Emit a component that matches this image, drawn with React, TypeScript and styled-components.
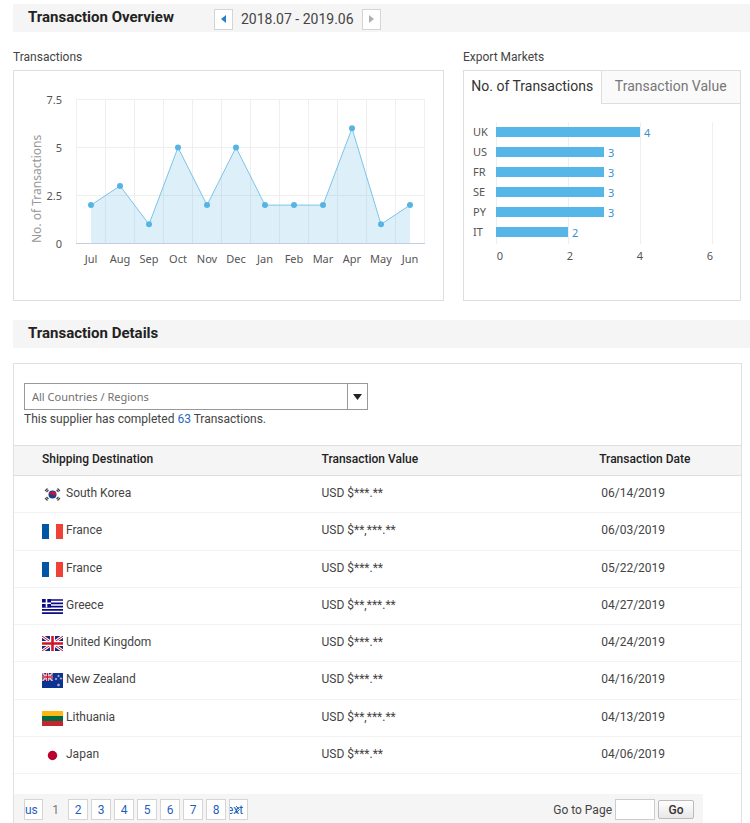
import React from "react";
import styled, { createGlobalStyle } from "styled-components";

const GlobalStyle = createGlobalStyle`
  * { box-sizing: border-box; }
  body {
    margin: 0;
    background: #fff;
    color: #444;
    font: 12px/16px Roboto, "Liberation Sans", sans-serif;
  }
`;

const Page = styled.main`
  padding: 4px 0 0 13px;
`;

const SectionBar = styled.header`
  display: flex;
  align-items: center;
  height: 28px;
  padding-left: 15px;
  background: #f5f5f5;
`;

const SectionTitle = styled.h2`
  margin: 0;
  padding-bottom: 3px;
  color: #222;
  font-size: 15px;
  line-height: 20px;
  font-weight: 700;
`;

const Period = styled.div`
  display: flex;
  align-items: center;
  gap: 8px;
  margin-left: 40px;
  padding-top: 2px;
  font-size: 14px;
`;

const StepButton = styled.button`
  display: flex;
  align-items: center;
  justify-content: center;
  width: 19px;
  height: 21px;
  padding: 0;
  border: 1px solid #d5d5d5;
  background: #fff;
  color: #2a7fd0;
  &:disabled { color: #b0b0b0; }
`;

const Charts = styled.div`
  display: grid;
  grid-template-columns: 431fr 278fr;
  gap: 19px;
  padding: 17px 9px 19px 0;
`;

const ChartBlock = styled.section`
  display: flex;
  flex-direction: column;
  gap: 5px;
  min-width: 0;
`;

const ChartTitle = styled.h3`
  margin: 0;
  font-size: 12px;
  line-height: 16px;
  font-weight: 400;
`;

const Card = styled.div`
  flex: 1;
  border: 1px solid #dedede;
`;

const Drawing = styled.svg`
  display: block;
  width: 100%;
  font: 11px "Noto Sans", "Open Sans", sans-serif;
  fill: #555;
`;

const AxisTitle = styled.text`
  font-size: 12px;
  fill: #999;
`;

const Tabs = styled.div`
  display: flex;
`;

const Tab = styled.button<{ $active?: boolean }>`
  flex: ${(p) => (p.$active ? "137 1 0" : "139 1 0")};
  height: 33px;
  padding: 0 0 3px;
  border: 0 solid #dedede;
  border-width: ${(p) => (p.$active ? "0" : "0 0 1px 1px")};
  background: ${(p) => (p.$active ? "#fff" : "#fafafa")};
  color: ${(p) => (p.$active ? "#333" : "#777")};
  font: 14px/16px Roboto, "Liberation Sans", sans-serif;
  white-space: nowrap;
`;

const Panel = styled.section`
  margin: 15px 8px 0 0;
  border: 1px solid #e0e0e0;
  border-bottom: 0;
`;

const Filter = styled.div`
  padding: 19px 10px 18px;
`;

const SelectBox = styled.div`
  position: relative;
  max-width: 344px;
`;

const Select = styled.select`
  appearance: none;
  display: block;
  width: 100%;
  height: 27px;
  padding: 0 28px 0 7px;
  border: 1px solid #999;
  border-radius: 0;
  background: #fff;
  color: #707070;
  font: 11px/16px "Noto Sans", "Open Sans", sans-serif;
`;

const SelectArrow = styled.span`
  position: absolute;
  top: 1px;
  right: 1px;
  bottom: 1px;
  display: flex;
  align-items: center;
  justify-content: center;
  width: 20px;
  border-left: 1px solid #999;
  pointer-events: none;
`;

const Summary = styled.p`
  margin: 1px 0 0;
  a { color: #1f69c0; text-decoration: none; }
`;

const Table = styled.table`
  width: 100%;
  height: 329px;
  border-collapse: collapse;
  table-layout: fixed;
`;

const HeadRow = styled.tr`
  height: 30px;
  border-top: 1px solid #dedede;
  border-bottom: 1px solid #dedede;
  background: #f5f5f5;
`;

const HeadCell = styled.th<{ $width?: string }>`
  width: ${(p) => p.$width ?? "auto"};
  padding: 0 0 3px;
  color: #222;
  font-weight: 500;
  text-align: left;
  &:first-child { padding-left: 28px; }
`;

const Row = styled.tr`
  border-bottom: 1px solid #f3f3f3;
`;

const Cell = styled.td`
  padding: 0 0 2px;
  &:first-child { padding-left: 28px; }
  &:last-child { padding-left: 2px; }
`;

const Destination = styled.span`
  display: flex;
  align-items: center;
  gap: 3px;
`;

const FlagSvg = styled.svg`
  width: 21px;
  height: 18px;
  padding-top: 3px;
`;

const PagerBar = styled.nav`
  display: flex;
  align-items: flex-start;
  justify-content: space-between;
  margin: 20px 38px 0 0;
  padding: 5px 9px 3px 10px;
  background: #f5f5f5;
`;

const Pages = styled.div`
  display: flex;
  gap: 3px;
`;

const PageLink = styled.a<{ $current?: boolean }>`
  display: flex;
  align-items: center;
  justify-content: center;
  position: relative;
  width: ${(p) => (p.$current ? "19px" : "20px")};
  height: 21px;
  overflow: hidden;
  border: 1px solid ${(p) => (p.$current ? "transparent" : "#d5d5d5")};
  background: ${(p) => (p.$current ? "transparent" : "#fff")};
  color: ${(p) => (p.$current ? "#777" : "#1f5fc0")};
  text-decoration: none;
`;

const EdgeLink = styled(PageLink)<{ $clipped?: boolean }>`
  width: 19px;
  justify-content: flex-start;
  text-indent: ${(p) => (p.$clipped ? "-3px" : "0")};
`;

const EdgeArrow = styled.svg`
  position: absolute;
  top: 5px;
  left: 5px;
`;

const GoForm = styled.form`
  display: flex;
  align-items: center;
  gap: 3px;
`;

const PageInput = styled.input`
  width: 40px;
  height: 21px;
  border: 1px solid #ccc;
  background: #fff;
`;

const GoButton = styled.button`
  width: 36px;
  height: 19px;
  padding: 0;
  border: 1px solid #bbb;
  border-radius: 2px;
  background: linear-gradient(#fff, #e8e8e8);
  color: #333;
  font: 500 12px/16px Roboto, "Liberation Sans", sans-serif;
`;

const monthly: [string, number][] = [
  ["Jul", 2], ["Aug", 3], ["Sep", 1], ["Oct", 5], ["Nov", 2], ["Dec", 5],
  ["Jan", 2], ["Feb", 2], ["Mar", 2], ["Apr", 6], ["May", 1], ["Jun", 2],
];

function LineChart() {
  const left = 62;
  const base = 172;
  const unit = 19.2;
  const step = 29;
  const px = (i: number) => left + 15 + i * step;
  const py = (v: number) => base + 0.5 - v * unit;
  const points = monthly.map(([, v], i) => `${px(i)},${py(v)}`).join(" ");
  return (
    <Drawing viewBox="0 0 429 229" role="img" aria-label="Transactions per month">
      <g fill="#efefef" shapeRendering="crispEdges">
        {Array.from({ length: 13 }, (_, i) => (
          <rect key={i} x={left + i * step} y={28} width={1} height={144} />
        ))}
        {[28, 76, 124].map((y) => <rect key={y} x={left} y={y} width={349} height={1} />)}
      </g>
      <polygon points={`${px(0)},${base} ${points} ${px(11)},${base}`} fill="#56b6e7" fillOpacity={0.2} />
      <rect x={left} y={base} width={349} height={1} fill="#c0d0e0" shapeRendering="crispEdges" />
      <polyline points={points} fill="none" stroke="#7cc4e8" />
      {monthly.map(([m, v], i) => (
        <g key={m}>
          <circle cx={px(i)} cy={py(v)} r={3} fill="#56b4e4" />
          <text x={px(i)} y={192} textAnchor="middle">{m}</text>
        </g>
      ))}
      {[7.5, 5, 2.5, 0].map((v) => (
        <text key={v} x={48} y={base + 5 - v * unit} textAnchor="end">{v}</text>
      ))}
      <AxisTitle transform="translate(27 172) rotate(-90)">No. of Transactions</AxisTitle>
    </Drawing>
  );
}

const markets: [string, number][] = [["UK", 4], ["US", 3], ["FR", 3], ["SE", 3], ["PY", 3], ["IT", 2]];

function BarChart() {
  return (
    <Drawing viewBox="0 0 276 196" role="img" aria-label="Transactions per export market">
      <g fill="#efefef" shapeRendering="crispEdges">
        {[0, 2, 4, 6].map((v) => <rect key={v} x={32 + v * 36} y={18} width={1} height={122} />)}
      </g>
      {markets.map(([name, v], i) => (
        <g key={name}>
          <text x={9} y={32 + i * 20}>{name}</text>
          <rect x={32} y={23 + i * 20} width={v * 36} height={10} fill="#56b6e7" />
          <text x={36 + v * 36} y={33 + i * 20} fill="#3d8fd0">{v}</text>
        </g>
      ))}
      {[0, 2, 4, 6].map((v) => (
        <text key={v} x={36 + v * 35} y={156} textAnchor="middle">{v}</text>
      ))}
    </Drawing>
  );
}

function UnionJack() {
  return (
    <>
      <rect width="21" height="15" fill="#162a7c" />
      <path d="M0 0 21 15M21 0 0 15" stroke="#fff" strokeWidth="3" />
      <path d="M0 0 21 15M21 0 0 15" stroke="#d0142c" strokeWidth="1" />
      <path d="M10.5 0V15M0 7.5H21" stroke="#fff" strokeWidth="5" />
      <path d="M10.5 0V15M0 7.5H21" stroke="#d0142c" strokeWidth="2.6" />
    </>
  );
}

const flags: Record<string, React.ReactNode> = {
  "South Korea": (
    <>
      <circle cx="10.5" cy="7.5" r="4" fill="#1b3f8f" />
      <path d="M7 9.2A4 4 0 0 1 14.2 6.2A2 2 0 0 1 10.5 7.5A2 2 0 0 0 7 9.2Z" fill="#cf1535" />
      <path d="M3 4 5.5 1.5M4.5 5 6.5 3M15.5 1.5 18 4M14.5 3 16.5 5M3 11 5.5 13.5M4.5 10 6.5 12M15.5 13.5 18 11M14.5 12 16.5 10" stroke="#444" strokeWidth="1.2" />
    </>
  ),
  France: (
    <>
      <rect width="7" height="15" fill="#0055a4" />
      <rect x="14" width="7" height="15" fill="#ef4135" />
    </>
  ),
  Greece: (
    <>
      <rect width="21" height="15" fill="#fff" />
      <path d="M0 1H21M0 4.3H21M0 7.6H21M0 10.9H21M0 14.2H21" stroke="#0b0b85" strokeWidth="1.7" />
      <rect width="9" height="8.4" fill="#0b0b85" />
      <path d="M4.5 0V8.4M0 4.2H9" stroke="#fff" strokeWidth="1.6" />
    </>
  ),
  "United Kingdom": <UnionJack />,
  "New Zealand": (
    <>
      <rect width="21" height="15" fill="#0b3393" />
      <svg width="11" height="8" viewBox="0 0 21 15" preserveAspectRatio="none"><UnionJack /></svg>
      <g fill="#e77b93" stroke="#fff" strokeWidth=".4">
        <circle cx="16.5" cy="3" r=".8" />
        <circle cx="14" cy="6" r=".8" />
        <circle cx="19" cy="5.5" r=".8" />
        <circle cx="16.5" cy="12" r="1" />
      </g>
    </>
  ),
  Lithuania: (
    <>
      <rect width="21" height="5" fill="#fdb913" />
      <rect y="5" width="21" height="5" fill="#006a44" />
      <rect y="10" width="21" height="5" fill="#c1272d" />
    </>
  ),
  Japan: <circle cx="10.5" cy="7.5" r="4.7" fill="#bc002d" />,
};

const shipments: [string, string, string][] = [
  ["South Korea", "USD $***.**", "06/14/2019"],
  ["France", "USD $**,***.**", "06/03/2019"],
  ["France", "USD $***.**", "05/22/2019"],
  ["Greece", "USD $**,***.**", "04/27/2019"],
  ["United Kingdom", "USD $***.**", "04/24/2019"],
  ["New Zealand", "USD $***.**", "04/16/2019"],
  ["Lithuania", "USD $**,***.**", "04/13/2019"],
  ["Japan", "USD $***.**", "04/06/2019"],
];

export default function App() {
  return (
    <Page>
      <GlobalStyle />
      <SectionBar>
        <SectionTitle>Transaction Overview</SectionTitle>
        <Period>
          <StepButton aria-label="Earlier period">
            <svg width="5" height="8" viewBox="0 0 5 8"><path d="M5 0V8L0 4Z" fill="currentColor" /></svg>
          </StepButton>
          <span>2018.07 - 2019.06</span>
          <StepButton aria-label="Later period" disabled>
            <svg width="5" height="8" viewBox="0 0 5 8"><path d="M0 0V8L5 4Z" fill="currentColor" /></svg>
          </StepButton>
        </Period>
      </SectionBar>

      <Charts>
        <ChartBlock>
          <ChartTitle>Transactions</ChartTitle>
          <Card><LineChart /></Card>
        </ChartBlock>
        <ChartBlock>
          <ChartTitle>Export Markets</ChartTitle>
          <Card>
            <Tabs role="tablist">
              <Tab role="tab" aria-selected $active>No. of Transactions</Tab>
              <Tab role="tab" aria-selected={false}>Transaction Value</Tab>
            </Tabs>
            <BarChart />
          </Card>
        </ChartBlock>
      </Charts>

      <SectionBar>
        <SectionTitle>Transaction Details</SectionTitle>
      </SectionBar>

      <Panel>
        <Filter>
          <SelectBox>
            <Select aria-label="Country or region">
              <option>All Countries / Regions</option>
            </Select>
            <SelectArrow>
              <svg width="9" height="6" viewBox="0 0 9 6"><path d="M0 0H9L4.5 6Z" fill="#222" /></svg>
            </SelectArrow>
          </SelectBox>
          <Summary>This supplier has completed <a href="#transactions">63</a> Transactions.</Summary>
        </Filter>
        <Table id="transactions">
          <thead>
            <HeadRow>
              <HeadCell $width="42.3%">Shipping Destination</HeadCell>
              <HeadCell $width="38.2%">Transaction Value</HeadCell>
              <HeadCell>Transaction Date</HeadCell>
            </HeadRow>
          </thead>
          <tbody>
            {shipments.map(([country, value, date]) => (
              <Row key={date}>
                <Cell>
                  <Destination>
                    <FlagSvg viewBox="0 0 21 15" aria-hidden="true">{flags[country]}</FlagSvg>
                    {country}
                  </Destination>
                </Cell>
                <Cell>{value}</Cell>
                <Cell>{date}</Cell>
              </Row>
            ))}
          </tbody>
        </Table>
        <PagerBar aria-label="Pages">
          <Pages>
            <EdgeLink href="#previous" aria-label="Previous">us</EdgeLink>
            {[1, 2, 3, 4, 5, 6, 7, 8].map((n) => (
              <PageLink key={n} href={`#page-${n}`} $current={n === 1}>{n}</PageLink>
            ))}
            <EdgeLink href="#next" aria-label="Next" $clipped>
              ext
              <EdgeArrow width="6" height="9" viewBox="0 0 6 9"><path d="M1 1 4.5 4.5 1 8" fill="none" stroke="currentColor" /></EdgeArrow>
            </EdgeLink>
          </Pages>
          <GoForm>
            <label htmlFor="go-page">Go to Page</label>
            <PageInput id="go-page" />
            <GoButton type="button">Go</GoButton>
          </GoForm>
        </PagerBar>
      </Panel>
    </Page>
  );
}
